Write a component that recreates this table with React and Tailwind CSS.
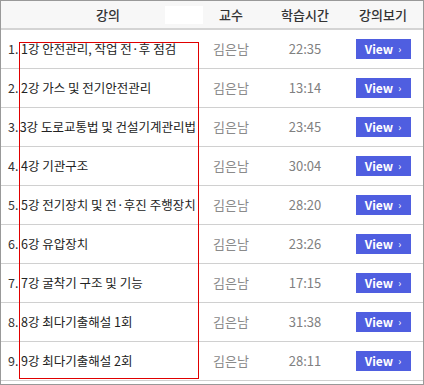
import React from "react";

const rows = [
  ["1강 안전관리, 작업 전·후 점검", "22:35"],
  ["2강 가스 및 전기안전관리", "13:14"],
  ["3강 도로교통법 및 건설기계관리법", "23:45"],
  ["4강 기관구조", "30:04"],
  ["5강 전기장치 및 전·후진 주행장치", "28:20"],
  ["6강 유압장치", "23:26"],
  ["7강 굴착기 구조 및 기능", "17:15"],
  ["8강 최다기출해설 1회", "31:38"],
  ["9강 최다기출해설 2회", "28:11"],
];

export default function App() {
  return (
    <div
      className="relative w-[424px] h-[385px] border border-[#999999] bg-white"
      style={{ fontFamily: '"Noto Sans CJK KR", "Noto Sans", sans-serif' }}
    >
      <div className="flex h-[29px] items-center bg-[#f7f7f7] border-b-2 border-[#d4d4d4] text-[13px] text-[#333333] font-medium">
        <div className="w-[195px] pl-[19px] text-center">강의</div>
        <div className="w-[70px] text-center">교수</div>
        <div className="w-[78px] text-center">학습시간</div>
        <div className="w-[78px] text-center">강의보기</div>
      </div>
      {rows.map(([title, time], i) => (
        <div
          key={i}
          className="flex h-[39px] items-center border-b border-[#d0d0d0] text-[12.5px]"
        >
          <div className="w-[195px] flex items-center pl-[7px] text-[#222222] whitespace-nowrap">
            <span className="w-[13px] text-[#333333]">{i + 1}.</span>
            <span>{title}</span>
          </div>
          <div className="w-[70px] text-center text-[#8a8a8a] text-[13px]">김은남</div>
          <div className="w-[78px] text-center text-[#808080] text-[13px]">{time}</div>
          <div className="w-[78px] flex justify-center">
            <div className="w-[55px] h-[20px] bg-[#4f5ee0] text-white flex items-center justify-center gap-[5px]">
              <span className="text-[12px] font-bold">View</span>
              <span className="text-[10px] leading-none">›</span>
            </div>
          </div>
        </div>
      ))}
      <div className="absolute left-[164px] top-[5px] w-[38px] h-[18px] bg-white" />
      <div className="absolute left-[18px] top-[41px] w-[180px] h-[337px] border border-[#e00000]" />
    </div>
  );
}
